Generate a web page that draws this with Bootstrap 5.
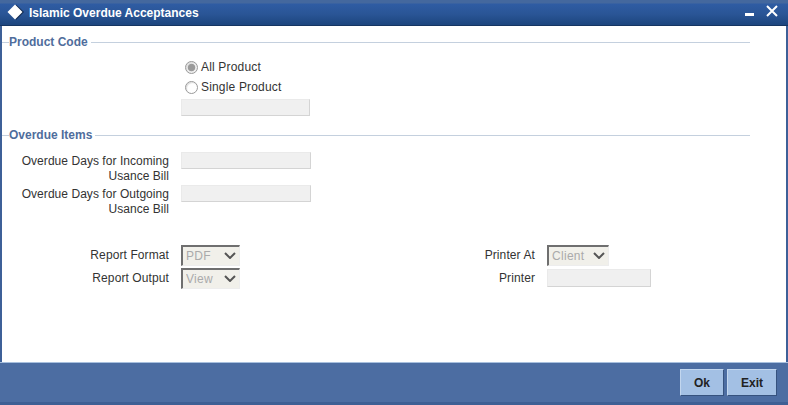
<!DOCTYPE html>
<html lang="en">
<head>
<meta charset="utf-8">
<title>Islamic Overdue Acceptances</title>
<link href="https://cdn.jsdelivr.net/npm/bootstrap@5.3.0/dist/css/bootstrap.min.css" rel="stylesheet">
<style>
html,body{margin:0;height:405px;overflow:hidden;background:#fff}
body{font-family:"Liberation Sans",Arial,sans-serif;font-size:12px;color:#333;line-height:15px}
.win{height:405px;width:788px;border-left:2px solid #3d6098;border-right:2px solid #3d6098}
.tbar{height:26px;margin:0 -2px;padding:0 10px 0 7px;background:linear-gradient(#44689e 0,#44689e 3px,#2f5ca3 4px,#2a5596 14px,#1d4680 24px);border-bottom:1px solid #153562;color:#fff}
.ttext{font-weight:700;font-size:12px;margin-left:5px;padding-top:1px}
.diamond{display:block}
.wctl{margin-left:auto;gap:12px;align-self:flex-start;padding-top:5px}
.wmin{margin-top:7px}
.mainarea{min-height:0}
.legendrow{height:15px;padding-right:36px}
.legendrow::before{content:"";width:7px;height:1px;background:#c4d0de}
.legendrow::after{content:"";flex:1;height:1px;background:#c4d0de;margin-left:3px}
.legtxt{font-weight:700;color:#4f6d9c}
.s1{margin-top:9px}
.s2{margin-top:12px}
.radios{margin:10px 0 0 183px;gap:5px}
.rad{gap:3px;height:15px}
.radmark{width:13px;height:13px;border:1px solid #9a9a9a;border-radius:50%;background:#fff;box-shadow:inset 1px 1px 1px #ddd}
.radmark.chk{background:radial-gradient(circle,#9a9a9a 0,#9a9a9a 3.4px,#eee 4.2px)}
.radtxt{letter-spacing:.17px}
.fld{height:17px;background:#f0f0f0;border:1px solid #eaeaea;border-bottom-color:#d4d4d4;border-right-color:#d4d4d4;padding:0;border-radius:0;display:block}
.w129{width:129px;margin:4px 0 0 179px}
.w130{width:130px}
.lbl{width:167px;text-align:right;letter-spacing:.05px;padding-top:2px}
.frow{gap:12px}
.f1{margin-top:9px}
.f2{margin-top:1px}
.repgrid{display:grid;grid-template-columns:167px 59px 283px 1fr;column-gap:12px;row-gap:2px;grid-auto-rows:21px;margin-top:28px;align-items:center}
.repa{text-align:right;letter-spacing:.1px}
.pickbox{appearance:none;height:21px;border-style:solid;border-width:2px 1px 1px 2px;border-color:#6f6f6f #ededed #ededed #6f6f6f;background:#f1f0ea;color:#aaa;font:12px "Liberation Sans",Arial,sans-serif;letter-spacing:.3px;padding:0 0 0 3px;border-radius:0;opacity:1}
.wp{width:59px}
.wc{width:62px}
.pickwrap{position:relative}
.chev{position:absolute;top:7px;left:43px}
.wc + .chev{left:46px}
.repcell{width:104px;height:18px;align-self:start;margin-top:1px}
.foot{height:43px;margin:0 -2px;background:#4c6da2;border-top:1px solid #a8c0de;border-bottom:3px solid #3e5f94;padding:6px 11px 0 0;gap:3px;align-items:flex-start}
.fbtn{width:44px;height:27px;padding:0;background:#a3c0e4;color:#222;font:700 12px "Liberation Sans",Arial,sans-serif;border:1px solid;border-color:#c2d6ee #36527e #36527e #c2d6ee;border-radius:0}
.fbtn.wide{width:50px}
</style>
</head>
<body>
<div class="win d-flex flex-column">
  <div class="tbar d-flex align-items-center flex-shrink-0">
    <svg class="diamond" width="17" height="17" viewBox="0 0 17 17"><path d="M9 0.500 17 8 9 16 7 8Z" fill="#10284e"/><path d="M8 0.500 15.500 8 8 15.500 0.500 8Z" fill="#fff"/></svg>
    <div class="ttext">Islamic Overdue Acceptances</div>
    <div class="wctl d-flex align-items-start">
      <svg class="wmin" width="9" height="4" viewBox="0 0 9 4"><rect y="1" width="9" height="3" fill="#fff"/></svg>
      <svg width="12" height="12" viewBox="0 0 12 12"><path d="M1 1l10 10M11 1 1 11" stroke="#fff" stroke-width="2"/></svg>
    </div>
  </div>
  <div class="mainarea flex-grow-1">
    <div class="legendrow d-flex align-items-center s1"><span class="legtxt">Product Code</span></div>
    <div class="radios d-flex flex-column">
      <div class="rad d-flex align-items-center"><span class="radmark chk"></span><span class="radtxt">All Product</span></div>
      <div class="rad d-flex align-items-center"><span class="radmark"></span><span class="radtxt">Single Product</span></div>
    </div>
    <input class="fld w129" disabled>
    <div class="legendrow d-flex align-items-center s2"><span class="legtxt">Overdue Items</span></div>
    <div class="frow d-flex f1"><div class="lbl">Overdue Days for Incoming Usance Bill</div><input class="fld w130" disabled></div>
    <div class="frow d-flex f2"><div class="lbl">Overdue Days for Outgoing Usance Bill</div><input class="fld w130" disabled></div>
    <div class="repgrid">
      <div class="repa">Report Format</div>
      <div class="pickwrap"><select class="pickbox wp d-block" disabled><option>PDF</option></select><svg class="chev" width="12" height="7" viewBox="0 0 12 7"><path d="M1 1l5 5 5-5" fill="none" stroke="#555" stroke-width="2"/></svg></div>
      <div class="repa">Printer At</div>
      <div class="pickwrap"><select class="pickbox wc d-block" disabled><option>Client</option></select><svg class="chev" width="12" height="7" viewBox="0 0 12 7"><path d="M1 1l5 5 5-5" fill="none" stroke="#555" stroke-width="2"/></svg></div>
      <div class="repa">Report Output</div>
      <div class="pickwrap"><select class="pickbox wp d-block" disabled><option>View</option></select><svg class="chev" width="12" height="7" viewBox="0 0 12 7"><path d="M1 1l5 5 5-5" fill="none" stroke="#555" stroke-width="2"/></svg></div>
      <div class="repa">Printer</div>
      <input class="fld repcell" disabled>
    </div>
  </div>
  <div class="foot d-flex justify-content-end flex-shrink-0">
    <button class="fbtn" type="button">Ok</button>
    <button class="fbtn wide" type="button">Exit</button>
  </div>
</div>
</body>
</html>
